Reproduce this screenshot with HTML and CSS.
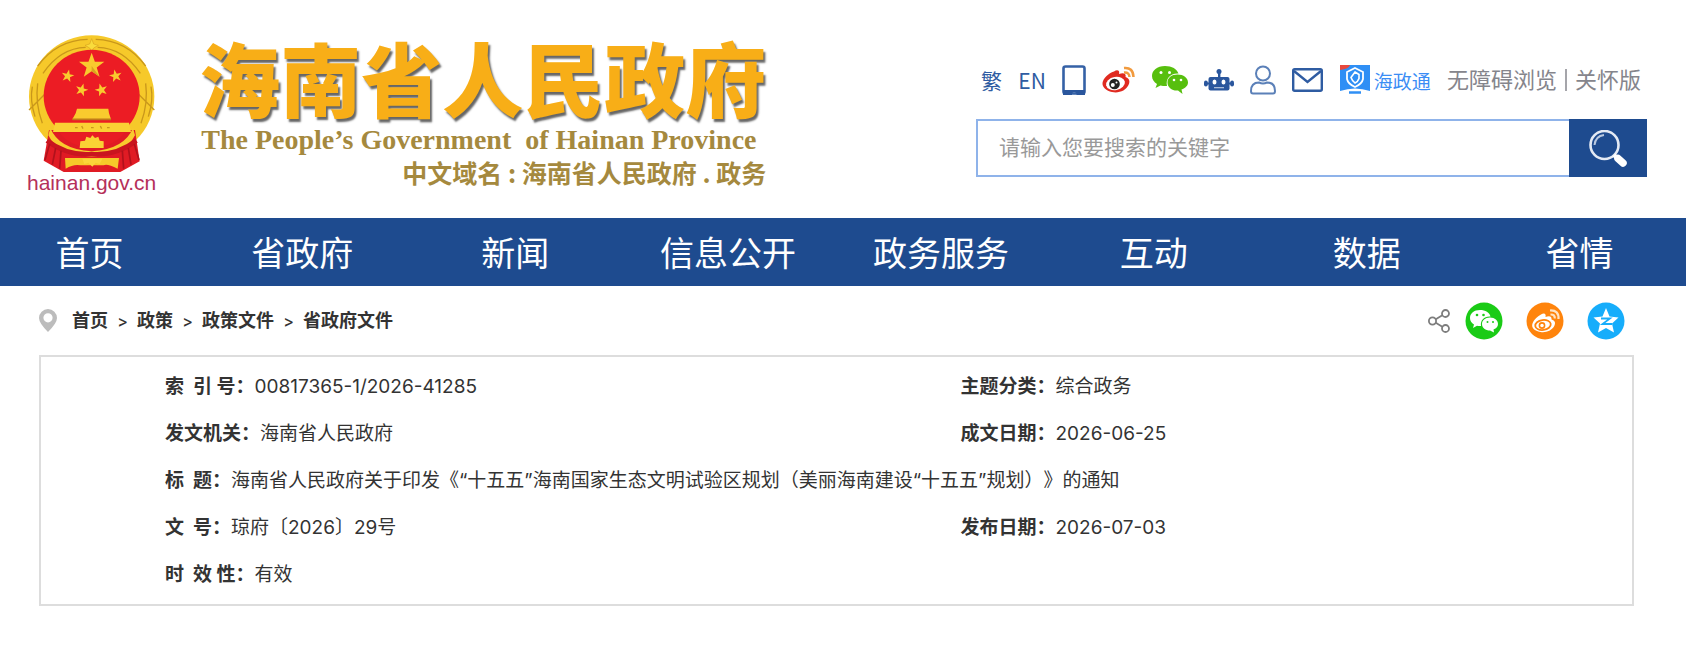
FILE: index.html
```html
<!DOCTYPE html>
<html lang="zh-CN">
<head>
<meta charset="utf-8">
<title>海南省人民政府</title>
<link rel="stylesheet" href="styles.css">
</head>
<body>
<svg class="defs" aria-hidden="true">
  <defs>
    <polygon id="star" points="0,-10 2.4,-3.1 9.5,-3.1 3.8,1.2 5.9,8.1 0,4 -5.9,8.1 -3.8,1.2 -9.5,-3.1 -2.4,-3.1"/>
  </defs>
</svg>
<header class="header">
  <a class="emblem" href="#">
    <svg class="emblem-art" viewBox="80 42 387 417" aria-hidden="true">
      <ellipse cx="274" cy="230" rx="188" ry="184" fill="#f6c92a"/>
      <g fill="none" stroke="#c9971b" stroke-width="4">
        <path d="M112 138 Q170 60 262 58M436 138 Q378 60 286 58M128 160 Q180 84 256 82M420 160 Q368 84 292 82"/>
        <path d="M86 270 L134 222M462 270 L414 222M96 200 Q88 240 104 290M452 200 Q460 240 444 290M112 190 Q104 250 126 310M436 190 Q444 250 422 310"/>
      </g>
      <path d="M274 56 l6 16 14 4 -14 8 -6 10 -6 -10 -14 -8 14 -4z" fill="#f9dc3c" stroke="#d9a520" stroke-width="2"/>
      <ellipse cx="274" cy="228" rx="144" ry="139" fill="#ec1c24"/>
      <g fill="#f9cb2e">
        <use href="#star" transform="translate(274 138) scale(4)"/>
        <use href="#star" transform="translate(202 168) rotate(12) scale(2)"/>
        <use href="#star" transform="translate(346 168) rotate(-12) scale(2)"/>
        <use href="#star" transform="translate(244 210) rotate(16) scale(2)"/>
        <use href="#star" transform="translate(303 210) rotate(-16) scale(2)"/>
      </g>
      <path d="M274 98 l0 40 24 32 -24 -16z" fill="#d9a520"/>
      <path d="M146 330 L404 330 L418 424 L360 456 L190 456 L130 422z" fill="#e01b24"/>
      <path d="M230 266 H324 L326 280 332 298 H216 L226 280z" fill="#f9cb2e"/>
      <path d="M216 298 H332" stroke="#c07a18" stroke-width="5"/>
      <path d="M164 308 H386 L392 336 H158z" fill="#fad134"/>
      <path d="M224 323h8M244 318l4 8M272 323h8M300 318l4 8M320 323h8" stroke="#c9971b" stroke-width="4"/>
      <path d="M150 324 Q176 388 274 394 Q372 388 398 324 L404 346 Q376 404 274 410 Q172 404 144 346z" fill="#f9cb2e"/>
      <path d="M178 338 H372 Q344 378 274 384 Q206 378 178 338z" fill="#e81c24"/>
      <path d="M238 384 L240 364 254 362 258 350 270 354 276 346 284 354 294 350 298 362 310 364 310 384z" fill="#fad134"/>
      <path d="M140 362 Q200 408 274 402 Q348 408 408 362" fill="none" stroke="#c9151f" stroke-width="14"/>
      <path d="M194 414 H356 L352 446 Q320 430 310 436 L240 436 Q220 432 196 446z" fill="#f6c92a"/>
      <path d="M206 448 Q274 426 346 448 L336 456 H214z" fill="#e01b24"/>
      <path d="M246 416 l6 16 12 -4 12 12 10 -12 12 4 8 -16z" fill="#fbd53a"/>
      <path d="M148 372 L134 420M166 384 L156 434M182 392 L178 446M402 372 L416 420M384 384 L392 434M366 392 L370 446" stroke="#b1121c" stroke-width="5"/>
    </svg>
    <span class="domain">hainan.gov.cn</span>
  </a>
  <div class="brand">
    <h1 class="brand-name">海南省人民政府</h1>
    <p class="brand-en">The People’s Government&nbsp; of Hainan Province</p>
    <p class="brand-domain">中文域名 : 海南省人民政府 . 政务</p>
  </div>
  <div class="tools">
    <div class="quick">
      <a class="lang" href="#">繁</a>
      <a class="lang" href="#">EN</a>
      <a href="#" aria-label="移动版"><svg width="24" height="30" viewBox="0 0 24 30"><rect x="1.5" y="1.5" width="21" height="27" rx="2" fill="none" stroke="#3561a6" stroke-width="2.6"/><path d="M1 25H23V30H14.500V28.200Q12 26.500 10 28.200V30H1z" fill="#2a569d"/></svg></a>
      <a href="#" aria-label="微博"><svg width="33" height="28" viewBox="0 0 33 28"><path d="M12 5.500C15 3.500 18 4 17 8C21 6.500 24.500 7 23.500 11C27 12 28.500 15 26.500 19C24 24.500 17 27.500 10 26C3 24.500 -1 20 1 15C3 10.500 8 6.500 12 5.500z" fill="#e02a20"/><ellipse cx="13.500" cy="17.500" rx="9.500" ry="6.500" transform="rotate(-10 13.500 17.500)" fill="#fff"/><circle cx="12.500" cy="18" r="5.300" fill="#222"/><circle cx="10.800" cy="19" r="2" fill="#fff"/><circle cx="14.500" cy="16.500" r="1" fill="#fff"/><path d="M22 2Q31 1 31.500 11M22 6.500Q27 6 27.500 11" fill="none" stroke="#f19a3e" stroke-width="2.500"/></svg></a>
      <a href="#" aria-label="微信"><svg width="36" height="28" viewBox="0 0 36 28"><path d="M13 0C5 0 0 4.500 0 10C0 13.500 2 16 5 18L3.500 22L8.500 19.500Q12 20.300 15 20C13.500 13 18 7 26.500 7.500C25 3 20 0 13 0z" fill="#57bf0e"/><path d="M25.500 8.500C19.500 8.500 15.500 12 15.500 16.500C15.500 21.500 20 25 26 24.500L30.500 28L29.500 23.500C33.500 22 36 19.500 36 16.500C36 12 31.500 8.500 25.500 8.500z" fill="#57bf0e"/><g fill="#fff"><circle cx="9" cy="6.500" r="1.500"/><circle cx="17.500" cy="6.500" r="1.500"/><circle cx="22" cy="14" r="1.300"/><circle cx="29" cy="14" r="1.300"/></g></svg></a>
      <a href="#" aria-label="智能问答"><svg width="30" height="22" viewBox="0 0 30 22"><g fill="#2a569d"><circle cx="15" cy="2.500" r="2.500"/><rect x="14" y="3" width="2.400" height="6"/><rect x="4.500" y="8" width="21" height="13.500" rx="2"/><rect x="0" y="11.500" width="3.800" height="6" rx="1.900"/><rect x="26.200" y="11.500" width="3.800" height="6" rx="1.900"/><path d="M2 13.500H28V15.500H2z"/></g><g fill="#fff"><ellipse cx="10.500" cy="13" rx="2" ry="2.500"/><ellipse cx="19.500" cy="13" rx="2" ry="2.500"/><path d="M10 18H20V19.300H10z" opacity=".6"/></g></svg></a>
      <a href="#" aria-label="个人中心"><svg width="26" height="30" viewBox="0 0 26 30" fill="none" stroke="#5b80b8" stroke-width="2"><circle cx="13" cy="8.500" r="7"/><path d="M3 28.500Q1 28.500 1 26C1 20 4 17.500 9 17.500Q13 19.500 17 17.500C22 17.500 25 20 25 26Q25 28.500 23 28.500z"/></svg></a>
      <a href="#" aria-label="邮箱"><svg width="31" height="24" viewBox="0 0 31 24" fill="none" stroke="#2f5ca2" stroke-width="2.400"><rect x="1.200" y="1.200" width="28.600" height="21.600" rx="1.500"/><path d="M2 3L15.500 14L29 3"/></svg></a>
      <a class="hzt" href="#"><svg width="30" height="30" viewBox="0 0 30 30"><path d="M0 0H30V26Q15 21 0 26z" fill="#2f8ff5"/><path d="M0 0H10Q9 4 0 5z" fill="#e8483c"/><path d="M15 3L23 7V14Q22 19 15 22Q8 19 7 14V7z" fill="none" stroke="#fff" stroke-width="1.800"/><path d="M15 7L19 9.500V13.500Q18 16.500 15 18Q12 15.500 11 12.500z" fill="none" stroke="#fff" stroke-width="1.600"/><path d="M9 27.500H21" stroke="#2f8ff5" stroke-width="2.500"/></svg>海政通</a>
      <span class="access"><a href="#">无障碍浏览</a><i class="bar"></i><a href="#">关怀版</a></span>
    </div>
    <form class="search">
      <input class="search-input" type="text" placeholder="请输入您要搜索的关键字" aria-label="搜索">
      <button class="search-btn" type="button" aria-label="搜索"><svg width="38" height="37" viewBox="0 0 38 37"><circle cx="15.500" cy="15" r="14" fill="none" stroke="#e4eaf4" stroke-width="2.600"/><path d="M5.500 15Q6.500 6 15 5" fill="none" stroke="#b9c8e0" stroke-width="2"/><path d="M25 25L28 28" stroke="#fff" stroke-width="4"/><path d="M29 28.500L34 33" stroke="#fff" stroke-width="7.500" stroke-linecap="round"/></svg></button>
    </form>
  </div>
</header>
<nav class="nav">
  <ul class="nav-list">
    <li><a href="#">首页</a></li>
    <li><a href="#">省政府</a></li>
    <li><a href="#">新闻</a></li>
    <li><a href="#">信息公开</a></li>
    <li><a href="#">政务服务</a></li>
    <li><a href="#">互动</a></li>
    <li><a href="#">数据</a></li>
    <li><a href="#">省情</a></li>
  </ul>
</nav>
<main class="main">
  <div class="crumb-row">
    <svg class="pin" width="18" height="23" viewBox="0 0 18 23"><path fill-rule="evenodd" d="M9 0A9 9 0 0 0 0 9Q0 14 9 23Q18 14 18 9A9 9 0 0 0 9 0zM9 4.200A4.600 4.600 0 1 1 9 13.400A4.600 4.600 0 1 1 9 4.200z" fill="#bcbcbc"/></svg>
    <div class="crumbs">
      <a href="#">首页</a><span>&gt;</span><a href="#">政策</a><span>&gt;</span><a href="#">政策文件</a><span>&gt;</span><a href="#">省政府文件</a>
    </div>
    <div class="share">
      <svg class="share-mark" width="22" height="24" viewBox="0 0 22 24" fill="none" stroke="#7d7d7d" stroke-width="1.800"><circle cx="4.500" cy="12" r="3.600"/><circle cx="17.500" cy="4.500" r="3.500"/><circle cx="17.500" cy="19.500" r="3.500"/><path d="M7.800 10.200L14.300 6.300M7.800 13.800L14.300 17.700"/></svg>
      <a href="#" aria-label="分享到微信"><svg width="38" height="38" viewBox="0 0 38 38"><circle cx="19" cy="19" r="18.500" fill="#1acb16"/><path d="M15 8C9 8 5 11.500 5 16C5 19 6.500 21 9 22.500L8 26L12 23.700Q14 24.200 16 24C15 18 19.500 14 25.500 14.500C24.500 10.500 20.500 8 15 8z" fill="#fff"/><path d="M25 15.500C20 15.500 17 18.500 17 22C17 26 20.500 28.500 25 28.500L29 30.500L28.500 27.500C31.500 26.500 33 24.500 33 22C33 18.500 30 15.500 25 15.500z" fill="#fff"/><g fill="#1acb16"><circle cx="12" cy="13" r="1.300"/><circle cx="18.500" cy="13" r="1.300"/><circle cx="22.500" cy="20" r="1"/><circle cx="28" cy="20" r="1"/></g></svg></a>
      <a href="#" aria-label="分享到微博"><svg width="38" height="38" viewBox="0 0 38 38"><circle cx="19" cy="19" r="18.500" fill="#ff840c"/><path d="M15 12.500C18 10.500 20.500 11.500 19.500 15C23 13.500 26 14 25.500 17.500C29 18.500 30 21 28 24.500C25.500 28.500 20 31 14.500 30C8.500 29 5 25.500 6.500 21.500C8 17.500 12 14 15 12.500z" fill="#fff"/><ellipse cx="17" cy="23" rx="7.800" ry="5" transform="rotate(-8 17 23)" fill="none" stroke="#ff840c" stroke-width="1.800"/><circle cx="16" cy="23.500" r="2.600" fill="none" stroke="#ff840c" stroke-width="1.600"/><path d="M24 8.500Q33 8 32.500 17M24.500 12.500Q29 12.300 28.800 16.500" fill="none" stroke="#ffe3c4" stroke-width="2.200"/></svg></a>
      <a href="#" aria-label="分享到QQ空间"><svg width="38" height="38" viewBox="0 0 38 38"><circle cx="19" cy="19" r="18.500" fill="#16adfb"/><path d="M19 6L22.500 14.500L31.500 15.500L25 21.500L27 30.500L19 26L11 30.500L13 21.500L6.500 15.500L15.500 14.500z" fill="#fff"/><path d="M14 16.500H23L15.500 22H25" fill="none" stroke="#16adfb" stroke-width="1.800"/></svg></a>
    </div>
  </div>
  <dl class="info">
    <div class="item"><dt>索&nbsp; 引&nbsp;号：</dt><dd>00817365-1/2026-41285</dd></div>
    <div class="item"><dt>主题分类：</dt><dd>综合政务</dd></div>
    <div class="item"><dt>发文机关：</dt><dd>海南省人民政府</dd></div>
    <div class="item"><dt>成文日期：</dt><dd>2026-06-25</dd></div>
    <div class="item wide"><dt>标&nbsp; 题：</dt><dd>海南省人民政府关于印发《“十五五”海南国家生态文明试验区规划（美丽海南建设“十五五”规划）》的通知</dd></div>
    <div class="item"><dt>文&nbsp; 号：</dt><dd>琼府〔2026〕29号</dd></div>
    <div class="item"><dt>发布日期：</dt><dd>2026-07-03</dd></div>
    <div class="item"><dt>时&nbsp; 效&nbsp;性：</dt><dd>有效</dd></div>
  </dl>
</main>
</body>
</html>
```

FILE: styles.css
```css
* {
  box-sizing: border-box;
}

body {
  margin: 0;
  background: #fff;
  color: #333;
  font-family: Inter, "Noto Sans CJK SC", sans-serif;
  font-size: 19px;
  text-spacing-trim: space-all;
}

a {
  color: inherit;
  text-decoration: none;
}

svg {
  display: block;
  flex: none;
}

.defs {
  position: absolute;
  width: 0;
  height: 0;
}

.header {
  display: flex;
  align-items: flex-start;
  padding: 34px 39px 25px 27px;
}

.emblem {
  display: flex;
  flex-direction: column;
  align-items: center;
  color: #b5305a;
}

.emblem-art {
  width: 129px;
  height: 139px;
}

.domain {
  font: 21px/20px "Liberation Sans", sans-serif;
}

.brand {
  margin-left: 43px;
  white-space: nowrap;
  color: #a5893e;
}

.brand-name {
  margin: 0;
  color: #f8ae17;
  font: 900 81px/84px "Noto Sans CJK SC", sans-serif;
  text-shadow: 2px 3px 2px #666;
}

.brand-en {
  margin: 0;
  padding: 4px 0 0 2px;
  font: bold 28px/36px "Liberation Serif", serif;
}

.brand-domain {
  margin: 0;
  text-align: right;
  font: bold 25px/28px "Noto Sans CJK SC", sans-serif;
}

.tools {
  flex: 0 1 671px;
  margin-left: auto;
  padding-top: 28px;
}

.quick {
  display: flex;
  align-items: center;
  justify-content: space-between;
  height: 36px;
  padding: 0 6px 0 5px;
  white-space: nowrap;
}

.lang {
  color: #2f5ca2;
  font-family: "Noto Sans CJK SC", sans-serif;
  font-size: 21px;
}

.hzt {
  display: flex;
  align-items: center;
  gap: 4px;
  color: #3b8df5;
  font-size: 19px;
}

.access {
  display: flex;
  align-items: center;
  gap: 8px;
  color: #85858c;
  font-size: 22px;
  line-height: 28px;
}

.bar {
  width: 2px;
  height: 22px;
  background: #a5a5aa;
}

.search {
  display: flex;
  height: 58px;
  margin-top: 21px;
}

.search-input {
  flex: 1;
  min-width: 0;
  border: 2px solid #8fb3ea;
  border-right: 0;
  padding: 0 21px 4px;
  background: #fff;
  font: 21px "Noto Sans CJK SC", sans-serif;
}

.search-input::placeholder {
  color: #999;
}

.search-btn {
  display: flex;
  align-items: center;
  justify-content: center;
  width: 78px;
  padding: 0;
  border: 0;
  background: #1e4b8f;
}

.nav {
  overflow: hidden;
  background: #1e4b8f;
}

.nav-list {
  display: grid;
  grid-template-columns: repeat(8, 1fr);
  margin: 0 0 0 -17px;
  padding: 0;
  list-style: none;
  color: #fff;
  text-align: center;
  font: 34px/68px "Noto Sans CJK SC", sans-serif;
}

.main {
  padding: 0 52px 40px 39px;
}

.crumb-row {
  display: flex;
  align-items: center;
  height: 69px;
}

.crumbs {
  display: flex;
  align-items: center;
  margin-left: 15px;
  font-size: 18px;
  font-weight: bold;
  line-height: 28px;
}

.crumbs span {
  width: 29px;
  text-align: center;
  font-size: 16px;
  font-weight: 500;
}

.share {
  display: flex;
  align-items: center;
  gap: 23px;
  margin: 0 9px 0 auto;
}

.share-mark {
  margin-right: -8px;
}

.info {
  display: grid;
  grid-template-columns: 1fr 1fr;
  margin: 0;
  padding: 6px 0;
  border: 2px solid #ddd;
}

.item {
  display: flex;
  padding-left: 124px;
  line-height: 47px;
}

.wide {
  grid-column: span 2;
}

.item dt {
  font-weight: bold;
}

.item dd {
  margin: 0;
}
```
